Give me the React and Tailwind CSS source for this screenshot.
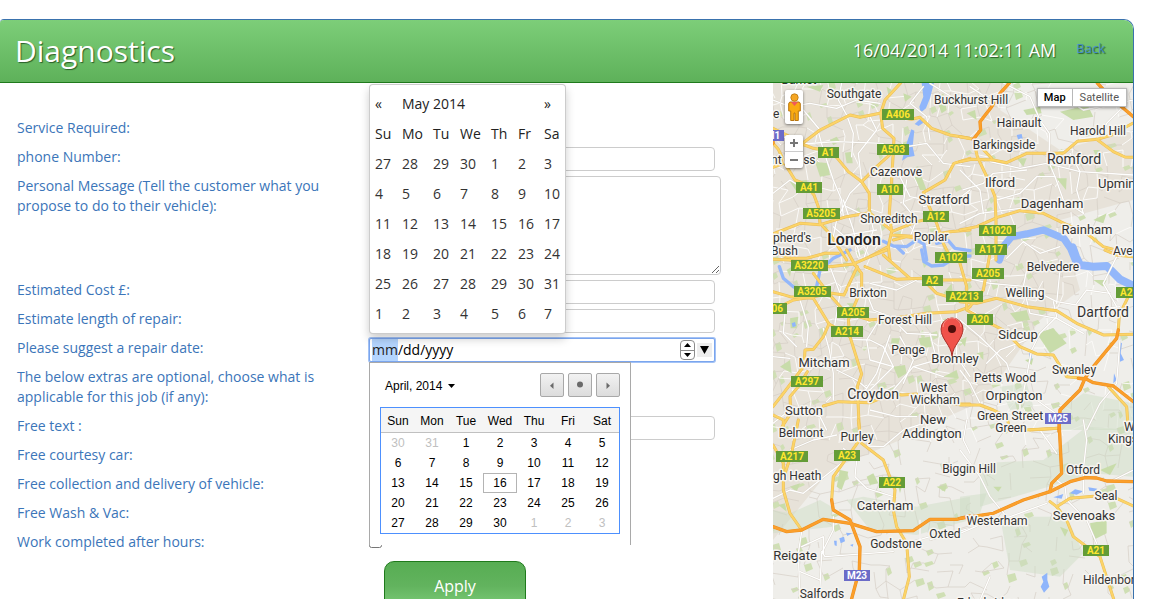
import React, { useEffect, useRef } from "react";

/* ---------- map data ---------- */

// Each tile is drawn at three times the map scale, from its own origin.
const TILES = [
  {
    at: "translate(770 80) scale(0.3333)",
    green: ["M135 245 L175 250 L180 285 L150 290Z", "M225 218 L245 215 L248 250 L230 250Z", "M60 305 L110 300 L118 330 L80 335Z", "M180 180 L200 170 L210 185 L190 195Z", "M435 290 L455 290 L470 330 L450 330Z", "M400 40 L425 50 L405 65Z", "M500 60 L520 40 L530 90 L515 100Z", "M110 20 L160 15 L150 35Z", "M350 20 L365 30 L355 45Z"],
    water: ["M455 9 L492 9 L480 55 L468 85 L452 98 L448 80 L460 50Z", "M434 132 L450 118 L460 128 L446 138Z", "M424 148 L433 152 L428 200 L434 228 L412 232 L396 242 L408 195Z"],
    river: ["M340 484 L370 498 L410 500 L440 480 L462 492 L470 540", "M500 490 L535 482 L555 505 L600 512"],
    riverWidth: 10,
    white: ["M9 60 L60 80 L120 70 L200 85 L260 60 L330 70", "M215 9 L205 60 L230 105 L250 160 L245 230", "M9 340 L60 300 L130 345", "M145 155 L160 210 L190 300 L215 360 L220 410", "M9 160 L95 192 L200 185 L340 190", "M300 110 L320 150 L265 220 L275 305 L240 340 L200 420 L190 470", "M410 200 L470 190 L520 250 L600 260", "M460 20 L420 70 L470 110 L480 180", "M380 270 L420 350 L470 360", "M410 300 L400 370 L440 420 L420 470", "M190 440 L260 500 L330 480", "M220 360 L250 450 L270 530", "M230 380 L330 430 L360 430", "M480 10 L560 60 L600 70", "M60 110 L100 90 L150 150", "M300 395 L310 450 L280 540", "M200 470 L320 450", "M460 380 L560 360 L600 330"],
    yellow: ["M95 192 L150 150 L190 130 L240 105 L270 112 L330 100 L350 105 L425 118 L450 112 L485 145 L540 165 L600 175", "M392 9 L345 60 L332 100 L338 145 L372 175 L370 215 L365 300 L358 400 L365 455 L355 500 L360 540", "M95 192 L130 205 L160 210 L200 232 L235 275 L275 305 L298 340 L298 395", "M370 215 L320 260 L275 305", "M9 190 L25 208 L50 260 L75 300 L100 310 L132 345 L145 380 L150 430 L180 462 L230 540", "M9 462 L90 430 L150 434 L230 410 L298 398 L365 452", "M9 145 L50 165 L95 192", "M600 235 L552 250 L525 300 L460 338 L480 385 L500 430 L520 490 L545 540", "M365 455 L440 425 L500 412", "M365 465 L450 470 L540 455 L600 450", "M370 480 L410 470 L440 474", "M9 515 L60 535 L110 535 L165 520 L205 520", "M9 262 L45 248", "M300 530 L355 500"],
    orange: ["M9 190 L9 175"],
  },
  {
    at: "translate(960 80) scale(0.3333)",
    green: ["M300 95 L345 85 L380 70 L400 110 L340 120Z", "M190 90 L240 80 L245 100 L200 105Z", "M170 235 L200 235 L190 260Z", "M290 295 L320 295 L318 330Z", "M400 420 L440 400 L430 430Z", "M400 210 L420 210 L410 235Z", "M20 100 L45 90 L50 120Z"],
    water: ["M170 165 L185 162 L188 176 L174 178Z", "M152 120 L158 118 L166 130 L158 132Z"],
    river: ["M118 540 L134 495 L155 470 L200 462 L250 450 L312 476 L332 505 L348 545"],
    riverWidth: 22,
    white: ["M130 9 L210 50 L240 120 L268 160 L268 250 L285 290 L310 360 L370 400", "M90 245 L180 265 L260 250 L360 275 L520 285", "M9 330 L70 310 L100 280 L200 270", "M110 360 L180 340 L230 290 L285 290", "M330 220 L360 275 L350 330 L370 400", "M0 430 L60 400 L180 385", "M290 40 L370 90 L520 60", "M420 180 L440 130 L500 70", "M0 270 L60 330 L70 400", "M140 535 L190 485 L240 520 L300 500", "M30 20 L90 60"],
    yellow: ["M0 245 L35 238 L100 240 L140 248 L200 220 L310 220 L352 184 L412 178 L455 165 L518 130", "M410 178 L460 215 L495 231 L518 232", "M0 170 L40 178 L52 230 L85 300 L105 350 L108 420 L108 540", "M0 450 L50 440 L112 412 L180 392 L250 400 L312 430 L380 460 L430 500 L475 512", "M40 178 L95 235"],
    orange: ["M148 9 L120 40 L95 80 L60 125 L62 150 L40 178", "M412 9 L450 50 L520 110"],
  },
  {
    at: "translate(770 250) scale(0.3333)",
    green: ["M60 205 L85 200 L80 235 L62 235Z", "M365 265 L390 265 L380 300 L362 290Z", "M370 350 L405 345 L410 370 L385 385Z", "M445 265 L480 260 L485 290 L455 295Z", "M50 60 L65 50 L60 80Z", "M230 160 L255 160 L250 180Z", "M520 130 L545 100 L550 140Z", "M30 350 L60 330 L65 370Z", "M520 380 L560 360 L565 385Z"],
    water: ["M65 220 L75 216 L78 228 L68 232Z"],
    river: ["M28 50 L40 85 L70 110 L110 128 L140 110 L150 60 L190 25 L240 0", "M400 9 L380 -10 M455 0 L462 35 L485 48 L520 45 L560 20 L600 18"],
    riverWidth: 10,
    white: ["M90 150 L115 230 L110 290", "M45 190 L40 250 L80 290", "M9 320 L60 325", "M160 235 L178 300 L190 370 L190 450", "M240 268 L300 270 L340 290 L370 350 L290 430", "M290 130 L310 180 L360 200 L410 250 L500 255", "M360 255 L320 370 L280 430", "M200 360 L260 390 L290 415", "M300 480 L380 500 L440 500", "M480 250 L500 330 L430 350 L370 420", "M390 260 L430 330 L400 400", "M560 180 L560 320 L600 380", "M300 100 L380 120 L440 90", "M430 350 L520 380", "M9 520 L60 480 L150 500 L170 540", "M340 190 L290 270 L300 330 L370 350", "M180 50 L210 130 L190 250"],
    yellow: ["M9 28 L60 30 L100 45 L180 50 L250 42 L300 20 L350 0", "M255 45 L275 70 L275 115 L235 210 L240 260 L275 372 L262 410 L268 540", "M130 140 L185 130 L222 135 L262 50", "M9 125 L60 140 L130 145 L177 222 L160 260 L130 298 L105 300 L102 348 L40 430 L9 470", "M9 180 L70 150 L130 140", "M130 70 L175 130 L215 175 L250 195 L300 210 L400 200 L470 190 L560 185 L600 170", "M285 50 L380 88 L460 85 L500 90 L600 90", "M340 15 L420 85", "M460 90 L500 130 L550 145 L600 150", "M177 222 L200 235 L240 260", "M160 468 L205 455 L300 458 L370 430 L395 435 L440 432 M520 458 L560 462 L600 462", "M112 365 L85 410 L60 440 L62 490 L30 540", "M230 0 L255 45", "M9 495 L40 510 L40 540"],
    orange: [],
  },
  {
    at: "translate(960 250) scale(0.3333)",
    green: ["M230 250 L280 235 L320 280 L270 310Z", "M150 190 L200 180 L210 210 L170 215Z", "M400 90 L440 90 L430 110Z", "M0 270 L20 260 L15 290Z", "M195 330 L220 325 L215 345Z", "M50 310 L70 305 L70 330Z"],
    meadow: ["M300 480 L370 430 L520 460 L520 540 L300 540Z", "M120 410 L200 400 L220 470 L150 480Z"],
    water: ["M208 310 L216 310 L214 330 L208 335Z", "M478 275 L486 280 L482 310 L492 330 L480 335Z", "M462 370 L470 390 L460 400Z"],
    river: ["M338 -8 L348 20 L360 45 L400 50 L440 48 L480 88 L520 108"],
    riverWidth: 24,
    white: ["M0 80 L90 100 L200 110 L290 155 L350 165 L400 180 L480 170", "M280 155 L290 200 L240 250 L215 300 L190 430", "M0 210 L60 260 L140 340 L160 400", "M80 340 L120 300 L200 270", "M350 160 L380 120 L450 130", "M480 270 L470 400 L420 460 L380 540", "M0 360 L30 400 L60 460", "M200 60 L190 110 L210 190 L290 205", "M290 205 L370 250", "M180 430 L180 540", "M230 450 L300 500", "M470 20 L430 100 L470 170", "M300 60 L290 160"],
    yellow: ["M0 155 L50 160 L110 145 L200 170 L290 182 L350 220 L430 255 L520 253", "M0 40 L20 110 L20 180 L90 220 L130 240 L180 290 L230 312 L280 315 L320 380 L370 385", "M0 465 L60 465 L100 480 L140 500 L150 540", "M210 540 L295 535", "M90 10 L70 120 L25 175", "M475 240 L478 195 L505 140", "M445 410 L500 470 L505 540", "M435 0 L470 15 L520 20"],
    orange: ["M475 240 L470 265 L400 350 L375 385 L360 420 L300 480 L297 545", "M355 385 L380 388 L400 398 L460 408 L520 455"],
  },
  {
    at: "translate(770 420) scale(0.3333)",
    green: ["M210 150 L235 155 L215 210 L200 200Z", "M290 170 L310 160 L325 190 L300 195Z", "M60 200 L90 190 L80 215Z", "M380 180 L400 185 L390 220Z", "M25 255 L45 250 L50 275Z", "M500 200 L530 195 L525 215Z"],
    meadow: ["M9 270 L60 280 L150 240 L185 260 L190 320 L9 340Z", "M230 240 L280 230 L440 260 L600 230 L600 300 L440 345 L300 330Z"],
    water: ["M208 355 L222 350 L225 364 L212 370Z", "M228 338 L246 340 L232 348Z", "M192 362 L200 362 L200 378 L194 376Z", "M240 375 L250 372 L248 380Z"],
    river: [],
    riverWidth: 4,
    white: ["M9 235 L60 210 L100 220 L150 180 L220 125", "M60 90 L130 60 L200 45", "M220 85 L260 120 L255 170 L290 205 L370 230", "M290 78 L340 80 L400 30 L460 10", "M190 290 L190 330 L155 400 L150 500", "M95 335 L85 400 L90 537", "M155 395 L165 410 L370 395", "M95 380 L160 350 L160 400", "M480 360 L540 340 L600 325", "M410 370 L480 350", "M90 455 L150 480", "M450 300 L450 360"],
    yellow: ["M265 0 L272 55 L240 100 L190 170 L185 240", "M275 70 L340 120 L375 210 L370 270 L380 320 L410 370 L418 470 L400 540", "M9 75 L40 130 L40 210 L60 280 L95 330", "M85 0 L65 100 L45 160"],
    orange: ["M9 320 L50 335 L95 330 L160 298 L240 310 L320 335 L430 332 L480 298 L560 298 L600 288", "M185 240 L190 270 L240 300 L270 380 L268 450 L244 540"],
  },
  {
    at: "translate(960 420) scale(0.3333)",
    green: ["M390 310 L440 300 L440 340 L400 360Z", "M300 320 L325 330 L315 350Z", "M420 150 L470 130 L450 165Z", "M100 200 L125 200 L115 215Z"],
    meadow: ["M60 130 L250 120 L380 20 L520 30 L520 170 L400 160 L200 220 L60 260Z", "M120 290 L320 290 L370 400 L300 470 L150 450Z", "M0 230 L80 220 L60 280 L0 290Z"],
    water: ["M245 470 L262 458 L262 480 L268 500 L252 518 L242 500 L250 485Z", "M280 232 L310 222 L305 236Z", "M330 220 L345 208 L370 214 L350 224Z", "M385 202 L412 206 L405 214 L388 212Z"],
    river: [],
    riverWidth: 4,
    white: ["M0 340 L70 310 L150 290 L260 250", "M0 90 L60 170 L90 230 L140 290", "M20 0 L10 60 L30 100", "M290 180 L315 200 L320 240 L380 300 L410 370", "M370 0 L380 60 L370 150 L370 220", "M240 30 L290 100", "M60 540 L90 470", "M460 180 L520 150"],
    yellow: ["M270 245 L290 260 L330 235 L410 228 L470 235 L520 258", "M290 260 L320 300 L340 350 L380 380 L420 410 L462 540", "M195 30 L295 25"],
    orange: ["M0 295 L100 280 L190 240 L270 215 L330 185 L375 173 L410 174 L440 183 L520 185", "M297 0 L305 160 L275 190 L270 215"],
  },
];

// Deterministic web of side streets under the main roads.
function sideStreets() {
  let seed = 11;
  const rnd = () => {
    seed = (seed * 16807) % 2147483647;
    return seed / 2147483647;
  };
  const step = 12;
  const cols = 33;
  const rows = 46;
  const pts = [];
  for (let r = 0; r < rows; r++) {
    for (let c = 0; c < cols; c++) {
      pts.push([Math.round(766 + c * step + rnd() * 10), Math.round(76 + r * step + rnd() * 10)]);
    }
  }
  let town = "";
  let lane = "";
  let parks = "";
  for (let r = 0; r < rows - 1; r++) {
    for (let c = 0; c < cols - 1; c++) {
      const [x, y] = pts[r * cols + c];
      const [rx, ry] = pts[r * cols + c + 1];
      const [dx, dy] = pts[(r + 1) * cols + c];
      const rural = r > 29;
      const density = rural ? 0.32 : c > 22 ? 0.5 : 0.75;
      if (rnd() < density) {
        const seg = `M${x} ${y}L${rx} ${ry}`;
        rnd() < 0.45 && !rural ? (town += seg) : (lane += seg);
      }
      if (rnd() < density) {
        const seg = `M${x} ${y}L${dx} ${dy}`;
        rnd() < 0.45 && !rural ? (town += seg) : (lane += seg);
      }
      if (rnd() < 0.16) {
        const w = 3 + Math.round(rnd() * 5);
        const h = 2 + Math.round(rnd() * 5);
        parks += `M${x} ${y}l${w} -2l2 ${h}l-${w} 3z`;
      }
    }
  }
  return { town, lane, parks };
}

const STREETS = sideStreets();

// [text, x, baseline, size, anchor]
const PLACES = [
  ["Barnet", 799, 84, 12], ["Southgate", 854, 98, 12], ["Buckhurst Hill", 971, 104, 12], ["Hainault", 1019, 127, 12],
  ["Harold Hill", 1098, 135, 12], ["Barkingside", 1004, 149, 12], ["Romford", 1074, 164, 14], ["Ilford", 1000, 187, 13],
  ["Upminster", 1098, 188, 13, "start"], ["Stratford", 944, 204, 13], ["Cazenove", 896, 176, 12], ["Dagenham", 1052, 208, 13],
  ["Rainham", 1087, 234, 13], ["Shoreditch", 889, 223, 12], ["Poplar", 931, 241, 12], ["Aveley", 1113, 255, 12, "start"],
  ["pherd's", 773, 242, 12, "start"], ["Bush", 771, 255, 12, "start"], ["Belvedere", 1053, 271, 12], ["Welling", 1025, 297, 12],
  ["Brixton", 868, 297, 12], ["Dartford", 1103, 317, 14], ["Forest Hill", 905, 324, 12], ["Sidcup", 1018, 339, 13],
  ["Penge", 908, 354, 12], ["Bromley", 955, 363, 13], ["Mitcham", 824, 367, 13], ["Swanley", 1074, 374, 12],
  ["Petts Wood", 1005, 382, 12], ["Croydon", 873, 399, 14], ["West", 934, 392, 12], ["Wickham", 935, 404, 12],
  ["Orpington", 1014, 400, 13], ["Sutton", 804, 415, 13], ["Green Street", 1010, 420, 12], ["Green", 1011, 432, 12],
  ["New", 933, 424, 13], ["Addington", 932, 438, 13], ["Belmont", 801, 437, 12], ["Purley", 857, 441, 12],
  ["West", 1124, 431, 12, "start"], ["Kingsdown", 1108, 443, 12, "start"], ["Biggin Hill", 969, 473, 12], ["Otford", 1083, 474, 12],
  ["gh Heath", 773, 480, 12, "start"], ["Caterham", 885, 510, 13], ["Seal", 1106, 500, 12], ["Westerham", 997, 525, 12],
  ["Sevenoaks", 1084, 520, 13], ["Oxted", 945, 538, 12], ["Godstone", 896, 548, 12], ["Reigate", 795, 560, 13],
  ["Hildenborough", 1083, 584, 12, "start"], ["Salfords", 822, 598, 12], ["Edenbridge", 987, 607, 12],
  ["e", 773, 118, 12, "start"], ["nt Cross", 771, 164, 12, "start"],
];

// [text, centre x, centre y]
const A_ROADS = [
  ["A406", 898, 115], ["A503", 893, 150], ["A1", 828, 153], ["A41", 809, 188], ["A10", 890, 190], ["A5205", 821, 214],
  ["A12", 936, 217], ["A1020", 997, 231], ["A117", 991, 250], ["A102", 951, 258], ["A3220", 809, 266], ["A205", 988, 274],
  ["A2", 932, 281], ["A3205", 812, 292], ["A2213", 964, 297], ["A282", 1132, 293], ["A205", 853, 313], ["A306", 771, 309],
  ["A20", 980, 320], ["A214", 847, 332], ["A297", 807, 382], ["A217", 792, 457], ["A23", 847, 456], ["A22", 892, 483],
  ["A21", 1096, 551],
];
const MOTORWAYS = [["M25", 1058, 419], ["M23", 857, 576], ["M1", 773, 136]];

function Shield({ text, x, y, motorway }) {
  const w = 9 + text.length * 5 + (text.length > 3 ? 3 : 2);
  return (
    <g>
      <rect x={x - Math.floor(w / 2)} y={y - 6} width={w} height={11} fill={motorway ? "#6c6cc8" : "#649c37"} />
      <text x={x} y={y + 3} textAnchor="middle" fontSize="10" fontWeight="700" fill={motorway ? "#ffffff" : "#ffe62e"}>
        {text}
      </text>
    </g>
  );
}

function MapDrawing() {
  return (
    <svg
      className="block h-full w-full"
      viewBox="773 83 360 516"
      preserveAspectRatio="xMinYMin slice"
      fontFamily="Roboto, sans-serif"
      role="img"
      aria-label="Map of south-east London"
    >
      <rect x="773" y="83" width="360" height="516" fill="#e7e2d9" />
      <path d="M1010 83 H1133 V130 L1060 150 L1030 130 L1000 110Z M1060 220 L1133 200 V599 H773 V540 L830 470 L900 440 L940 420 L985 400 L1040 320 L1080 290Z" fill="#efeeea" />
      <g fill="none" strokeLinejoin="round">
        <path d={STREETS.parks} fill="#cfdfb4" />
        <path d={STREETS.lane} stroke="#d5cfc5" strokeWidth="0.7" />
        <path d={STREETS.town} stroke="#fbfaf8" strokeWidth="1" />
      </g>
      {TILES.map((t) => (
        <g key={t.at} transform={t.at}>
          {(t.meadow || []).map((d) => <path key={d} d={d} fill="#cbdcc4" opacity="0.45" />)}
          {t.green.map((d) => <path key={d} d={d} fill="#c8dcaa" />)}
          {t.water.map((d) => <path key={d} d={d} fill="#8fb5fb" />)}
        </g>
      ))}
      {TILES.map((t) => (
        <g key={t.at} transform={t.at} fill="none" strokeLinejoin="round" strokeLinecap="round">
          {t.river.map((d) => <path key={d} d={d} stroke="#93b7fa" strokeWidth={t.riverWidth} />)}
          {t.white.map((d) => <path key={d} d={d} stroke="#d6d0c6" strokeWidth="6" />)}
          {t.white.map((d) => <path key={d} d={d} stroke="#ffffff" strokeWidth="4" />)}
        </g>
      ))}
      {TILES.map((t) => (
        <g key={t.at} transform={t.at} fill="none" strokeLinejoin="round" strokeLinecap="round">
          {t.yellow.map((d) => <path key={d} d={d} stroke="#e9bd58" strokeWidth="9" />)}
          {t.yellow.map((d) => <path key={d} d={d} stroke="#fcd468" strokeWidth="6" />)}
        </g>
      ))}
      {TILES.map((t) => (
        <g key={t.at} transform={t.at} fill="none" strokeLinejoin="round" strokeLinecap="round">
          {t.orange.map((d) => <path key={d} d={d} stroke="#ec8f1f" strokeWidth="10" />)}
          {t.orange.map((d) => <path key={d} d={d} stroke="#fb9f2b" strokeWidth="7" />)}
        </g>
      ))}
      {A_ROADS.map(([text, x, y]) => <Shield key={text + y} text={text} x={x} y={y} />)}
      {MOTORWAYS.map(([text, x, y]) => <Shield key={text} text={text} x={x} y={y} motorway />)}
      <g fill="#333333" stroke="#f7f5f1" strokeWidth="3" strokeLinejoin="round" paintOrder="stroke">
        {PLACES.map(([text, x, y, size, anchor]) => (
          <text key={text + y} x={x} y={y} fontSize={size} textAnchor={anchor || "middle"}>{text}</text>
        ))}
        <text x="854" y="245" fontSize="16" fontWeight="500" textAnchor="middle" fill="#222222">London</text>
      </g>
      <path d="M952 356 C951 345 941 339 941 329 A11 11 0 0 1 963 329 C963 339 953 345 952 356Z" fill="#f0524a" stroke="#a82f28" strokeWidth="1" />
      <path d="M943 327 A9 9 0 0 1 961 327" fill="none" stroke="#f98f88" strokeWidth="1" />
      <circle cx="952" cy="329" r="4" fill="#4f0d0a" />
    </svg>
  );
}

function Pegman() {
  return (
    <svg className="h-[29px] w-[15px]" viewBox="0 0 15 29" aria-hidden="true">
      <circle cx="7.5" cy="4.5" r="3.7" fill="#f5a623" stroke="#b9760f" strokeWidth="0.8" />
      <path d="M3 9 H12 Q13.300 9.500 13.300 11 V18 H11.300 V27.500 H8 V20 H7 V27.500 H3.700 V18 H1.700 V11 Q1.700 9.500 3 9Z" fill="#f9ab12" stroke="#b9760f" strokeWidth="1" />
      <path d="M4 9 H11 L7.500 13Z" fill="#ef5a5a" />
    </svg>
  );
}

function MapPanel() {
  return (
    <section className="relative w-[360px] shrink-0 overflow-hidden">
      <MapDrawing />
      <div className="absolute top-[7px] left-3 flex flex-col gap-[11px]">
        <button type="button" aria-label="Street View" className="flex h-[34px] w-[18px] items-center justify-center rounded-xs bg-white shadow-[0_1px_3px_rgba(0,0,0,0.5)]">
          <Pegman />
        </button>
        <div className="flex w-[18px] flex-col items-stretch rounded-xs bg-white shadow-[0_1px_3px_rgba(0,0,0,0.5)]">
          <button type="button" aria-label="Zoom in" className="flex h-[17px] items-center justify-center border-b border-[#cccccc]">
            <svg className="h-[8px] w-[8px]" viewBox="0 0 8 8"><path d="M4 0V8M0 4H8" stroke="#777777" strokeWidth="2" /></svg>
          </button>
          <button type="button" aria-label="Zoom out" className="flex h-[16px] items-center justify-center">
            <svg className="h-[8px] w-[8px]" viewBox="0 0 8 8"><path d="M0 4H8" stroke="#777777" strokeWidth="2" /></svg>
          </button>
        </div>
      </div>
      <div className="absolute top-[5px] right-[6px] flex h-[19px] border border-[#b8b8b8] bg-white font-[Roboto,sans-serif] text-[11px] leading-[17px] shadow-[0_1px_3px_rgba(0,0,0,0.4)]">
        <button type="button" className="border-r border-[#b8b8b8] px-[6px] font-medium text-black">Map</button>
        <button type="button" className="px-[7px] text-[#565656]">Satellite</button>
      </div>
    </section>
  );
}

/* ---------- calendars ---------- */

const MAY_HEAD = ["Su", "Mo", "Tu", "We", "Th", "Fr", "Sa"];
const MAY = [
  [27, 28, 29, 30, 1, 2, 3],
  [4, 5, 6, 7, 8, 9, 10],
  [11, 12, 13, 14, 15, 16, 17],
  [18, 19, 20, 21, 22, 23, 24],
  [25, 26, 27, 28, 29, 30, 31],
  [1, 2, 3, 4, 5, 6, 7],
];

function MayCalendar() {
  return (
    <div className="absolute bottom-full left-0 z-20 mb-1 w-[197px] rounded-[4px] border border-black/20 bg-white p-[4px] shadow-[0_5px_10px_rgba(0,0,0,0.2)]">
      <table className="w-full table-fixed text-left text-[14px] leading-5 text-[#333333]">
        <colgroup>
          <col className="w-[27px]" />
          <col className="w-[31px]" />
          <col className="w-[27px]" />
          <col className="w-[31px]" />
          <col className="w-[27px]" />
          <col className="w-[26px]" />
          <col />
        </colgroup>
        <thead className="text-[#222222]">
          <tr className="h-[30px]">
            <th className="pl-[1px] font-normal"><button type="button" aria-label="Previous month">«</button></th>
            <th colSpan={5} className="pl-[1px] font-normal">May 2014</th>
            <th className="pl-[1px] font-normal"><button type="button" aria-label="Next month">»</button></th>
          </tr>
          <tr className="h-[30px]">
            {MAY_HEAD.map((d) => <th key={d} className="pl-[1px] font-normal">{d}</th>)}
          </tr>
        </thead>
        <tbody>
          {MAY.map((week, i) => (
            <tr key={i} className="h-[30px]">
              {week.map((d) => <td key={d} className="pl-[1px]">{d}</td>)}
            </tr>
          ))}
        </tbody>
      </table>
    </div>
  );
}

const APRIL_HEAD = ["Sun", "Mon", "Tue", "Wed", "Thu", "Fri", "Sat"];
const APRIL = [
  [-30, -31, 1, 2, 3, 4, 5],
  [6, 7, 8, 9, 10, 11, 12],
  [13, 14, 15, 16, 17, 18, 19],
  [20, 21, 22, 23, 24, 25, 26],
  [27, 28, 29, 30, -1, -2, -3],
];

function NavButton({ label, children }) {
  return (
    <button type="button" aria-label={label} className="flex h-6 w-6 items-center justify-center rounded-xs border border-[#a8a8a8] bg-linear-to-b from-[#f2f2f2] to-[#dcdcdc]">
      <svg className="h-[10px] w-[10px]" viewBox="0 0 10 10" fill="#6a6a6a">{children}</svg>
    </button>
  );
}

function AprilCalendar() {
  return (
    <div className="absolute top-full left-0 z-10 h-[183px] w-[262px] border border-b-0 border-[#a9a9a9] bg-white px-[10px] pt-[10px] font-['Liberation_Sans',Arial,sans-serif] text-[12px] text-black">
      <div className="flex items-center justify-between pl-[5px]">
        <button type="button" className="flex items-center gap-[6px] pt-[2px]">
          April, 2014
          <svg className="h-1 w-[7px]" viewBox="0 0 7 4"><path d="M0 0H7L3.500 4Z" /></svg>
        </button>
        <div className="flex gap-1">
          <NavButton label="Previous month"><path d="M6.500 2.500V9L3 5.750Z" /></NavButton>
          <NavButton label="Today"><circle cx="5" cy="4.500" r="3" /></NavButton>
          <NavButton label="Next month"><path d="M3.500 2.500V9L7 5.750Z" /></NavButton>
        </div>
      </div>
      <div className="mt-[10px] border border-[#4d90fe]">
        <table className="w-full table-fixed border-collapse text-center">
          <thead>
            <tr className="h-6 border-b border-[#c0c0c0] bg-[#f5f5f5]">
              {APRIL_HEAD.map((d) => <th key={d} className="pt-[2px] font-normal">{d}</th>)}
            </tr>
          </thead>
          <tbody>
            {APRIL.map((week, i) => (
              <tr key={i} className="h-5 leading-[18px]">
                {week.map((d) => (
                  <td key={d} className={d < 0 ? "text-[#c0c0c0]" : ""}>
                    <span className={d === 16 ? "block border border-[#b4b4b4]" : "block border border-transparent"}>{Math.abs(d)}</span>
                  </td>
                ))}
              </tr>
            ))}
          </tbody>
        </table>
      </div>
    </div>
  );
}

/* ---------- form ---------- */

const INPUT = "block h-6 w-[346px] rounded-[4px] border border-[#cccccc] bg-white px-1 outline-none";

function Row({ label, id, children }) {
  return (
    <div className="flex">
      <label htmlFor={id} className="w-[352px] shrink-0 pr-5 pb-1 text-[14px] leading-5 text-[#3b75b9]">{label}</label>
      <div>{children}</div>
    </div>
  );
}

function DateField() {
  const ref = useRef(null);
  useEffect(() => {
    ref.current.focus({ preventScroll: true });
    ref.current.setSelectionRange(0, 2);
  }, []);
  return (
    <div className="relative w-[346px]">
      <div className="flex h-6 items-center rounded-xs border border-[#7aa5ee] bg-white pr-[2px] pl-[2px] ring-1 ring-[#a3c2f5]">
        <input
          ref={ref}
          id="repair-date"
          type="text"
          defaultValue="mm/dd/yyyy"
          className="h-[22px] min-w-0 flex-1 text-[14px] leading-[22px] text-black outline-none selection:bg-[#b4d5fe] selection:text-[#222222]"
        />
        <div className="flex h-5 w-[15px] flex-col overflow-hidden rounded-[4px] border border-[#8c8c8c]">
          <button type="button" aria-label="Increase" className="flex flex-1 items-center justify-center border-b border-[#8c8c8c]">
            <svg className="h-1 w-[7px]" viewBox="0 0 7 4"><path d="M0 4H7L3.500 0Z" /></svg>
          </button>
          <button type="button" aria-label="Decrease" className="flex flex-1 items-center justify-center">
            <svg className="h-1 w-[7px]" viewBox="0 0 7 4"><path d="M0 0H7L3.500 4Z" /></svg>
          </button>
        </div>
        <button type="button" aria-label="Open calendar" className="ml-[2px] flex h-[14px] w-[15px] items-center justify-center bg-[#eeeeee]">
          <svg className="h-2 w-[9px]" viewBox="0 0 9 8"><path d="M0 0H9L4.500 8Z" /></svg>
        </button>
      </div>
      <MayCalendar />
      <AprilCalendar />
    </div>
  );
}

function DiagnosticsForm() {
  return (
    <form className="min-w-0 flex-1 pt-[35px] pl-[17px]">
      <div className="flex flex-col gap-[5px]">
        <Row label="Service Required:" />
        <Row label="phone Number:" id="phone"><input id="phone" type="tel" className={INPUT} /></Row>
        <Row label="Personal Message (Tell the customer what you propose to do to their vehicle):" id="message">
          <textarea id="message" className="block h-[99px] w-[352px] rounded-[4px] border border-[#cccccc] bg-white" />
        </Row>
        <Row label="Estimated Cost £:" id="cost"><input id="cost" type="text" className={INPUT} /></Row>
        <Row label="Estimate length of repair:" id="length"><input id="length" type="text" className={INPUT} /></Row>
        <Row label="Please suggest a repair date:" id="repair-date"><DateField /></Row>
        <Row label="The below extras are optional, choose what is applicable for this job (if any):" />
        <Row label="Free text :" id="free-text"><input id="free-text" type="text" className={INPUT} /></Row>
        <Row label="Free courtesy car:" id="car"><input id="car" type="checkbox" className="mt-[3px] block" /></Row>
        <Row label="Free collection and delivery of vehicle:" id="collect"><input id="collect" type="checkbox" className="mt-[3px] block" /></Row>
        <Row label="Free Wash & Vac:" id="wash"><input id="wash" type="checkbox" className="mt-[3px] block" /></Row>
        <Row label="Work completed after hours:" id="hours"><input id="hours" type="checkbox" className="mt-[3px] block" /></Row>
      </div>
      <div className="pt-[5px] pl-[367px]">
        <button
          type="submit"
          className="block h-[50px] w-[142px] rounded-[10px] border border-[#1f7a1c] bg-linear-to-b from-[#57ad53] via-[#62b35e] via-50% to-[#7fcf7b] text-[16px] text-white"
        >
          Apply
        </button>
      </div>
    </form>
  );
}

export default function App() {
  return (
    <div className="h-screen overflow-hidden bg-white pt-[19px] pr-[37px] font-['Open_Sans',sans-serif]">
      <div className="flex h-full flex-col overflow-hidden rounded-tl-[4px] rounded-tr-[10px] border-t border-r border-[#3a72ad]">
        <header className="flex h-[63px] shrink-0 items-center border-b border-[#1f7a1c] bg-linear-to-b from-[#7dce79] to-[#5eb15a] pr-7 pb-[2px] pl-[15px] text-white">
          <h1 className="flex-1 text-[30px] text-shadow-[1px_1px_1px_#2a5f28]">Diagnostics</h1>
          <span className="text-[18px] text-shadow-[1px_1px_1px_#2a5f28]">16/04/2014 11:02:11 AM</span>
          <a href="#back" className="ml-5 pb-[2px] text-[13px] text-[#428bca] text-shadow-[1px_1px_1px_#2a5f28]">Back</a>
        </header>
        <main className="flex min-h-0 flex-1">
          <DiagnosticsForm />
          <MapPanel />
        </main>
      </div>
    </div>
  );
}
